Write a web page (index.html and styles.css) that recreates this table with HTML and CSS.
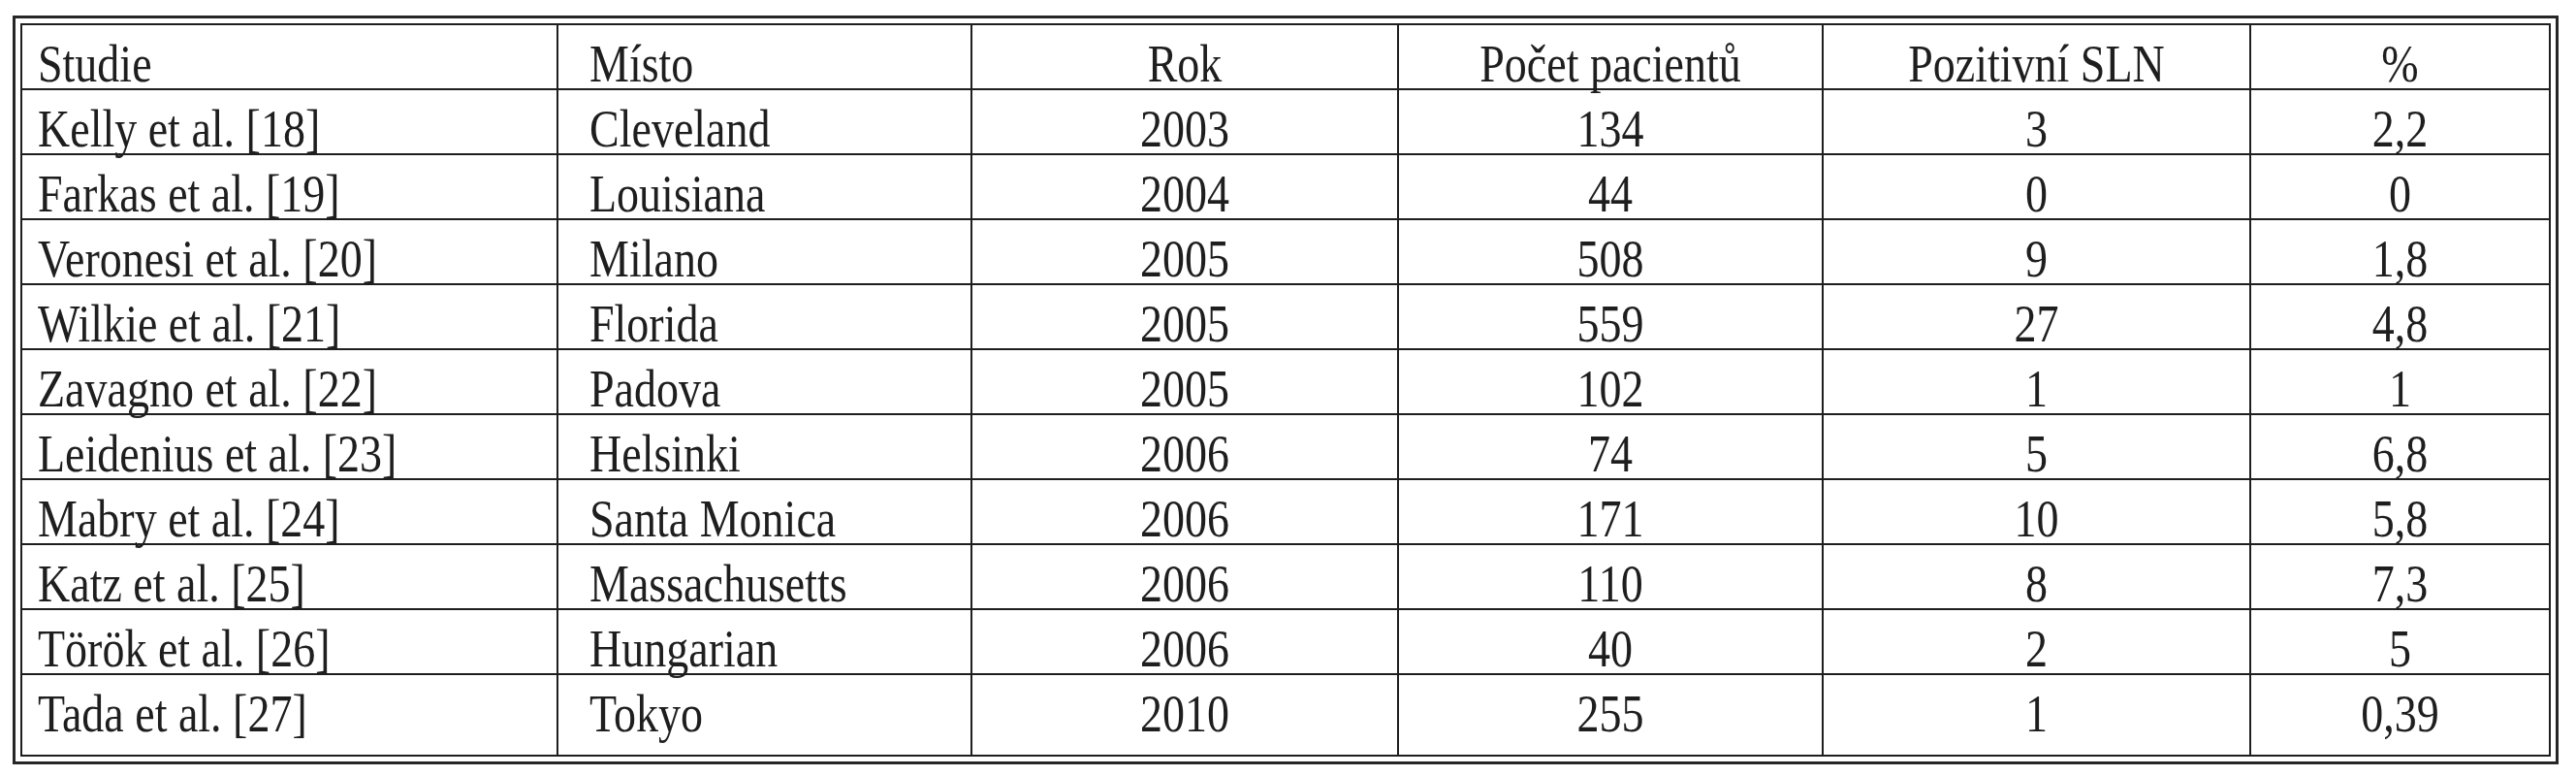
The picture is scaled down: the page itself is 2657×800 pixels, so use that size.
FILE: index.html
```html
<!DOCTYPE html>
<html lang="cs">
<head>
<meta charset="utf-8">
<title>Tabulka</title>
<link rel="stylesheet" href="styles.css">
</head>
<body>
<div class="frame">
  <table class="data">
    <colgroup>
      <col class="c1"><col class="c2"><col class="c3"><col class="c4"><col class="c5"><col class="c6">
    </colgroup>
    <tbody>
      <tr><td class="l1"><span class="t">Studie</span></td><td class="l2"><span class="t">Místo</span></td><td><span class="t">Rok</span></td><td><span class="t">Počet pacientů</span></td><td><span class="t">Pozitivní SLN</span></td><td><span class="t">%</span></td></tr>
      <tr><td class="l1"><span class="t">Kelly et al. [18]</span></td><td class="l2"><span class="t">Cleveland</span></td><td><span class="t">2003</span></td><td><span class="t">134</span></td><td><span class="t">3</span></td><td><span class="t">2,2</span></td></tr>
      <tr><td class="l1"><span class="t">Farkas et al. [19]</span></td><td class="l2"><span class="t">Louisiana</span></td><td><span class="t">2004</span></td><td><span class="t">44</span></td><td><span class="t">0</span></td><td><span class="t">0</span></td></tr>
      <tr><td class="l1"><span class="t">Veronesi et al. [20]</span></td><td class="l2"><span class="t">Milano</span></td><td><span class="t">2005</span></td><td><span class="t">508</span></td><td><span class="t">9</span></td><td><span class="t">1,8</span></td></tr>
      <tr><td class="l1"><span class="t">Wilkie et al. [21]</span></td><td class="l2"><span class="t">Florida</span></td><td><span class="t">2005</span></td><td><span class="t">559</span></td><td><span class="t">27</span></td><td><span class="t">4,8</span></td></tr>
      <tr><td class="l1"><span class="t">Zavagno et al. [22]</span></td><td class="l2"><span class="t">Padova</span></td><td><span class="t">2005</span></td><td><span class="t">102</span></td><td><span class="t">1</span></td><td><span class="t">1</span></td></tr>
      <tr><td class="l1"><span class="t">Leidenius et al. [23]</span></td><td class="l2"><span class="t">Helsinki</span></td><td><span class="t">2006</span></td><td><span class="t">74</span></td><td><span class="t">5</span></td><td><span class="t">6,8</span></td></tr>
      <tr><td class="l1"><span class="t">Mabry et al. [24]</span></td><td class="l2"><span class="t">Santa Monica</span></td><td><span class="t">2006</span></td><td><span class="t">171</span></td><td><span class="t">10</span></td><td><span class="t">5,8</span></td></tr>
      <tr><td class="l1"><span class="t">Katz et al. [25]</span></td><td class="l2"><span class="t">Massachusetts</span></td><td><span class="t">2006</span></td><td><span class="t">110</span></td><td><span class="t">8</span></td><td><span class="t">7,3</span></td></tr>
      <tr><td class="l1"><span class="t">Török et al. [26]</span></td><td class="l2"><span class="t">Hungarian</span></td><td><span class="t">2006</span></td><td><span class="t">40</span></td><td><span class="t">2</span></td><td><span class="t">5</span></td></tr>
      <tr class="last"><td class="l1"><span class="t">Tada et al. [27]</span></td><td class="l2"><span class="t">Tokyo</span></td><td><span class="t">2010</span></td><td><span class="t">255</span></td><td><span class="t">1</span></td><td><span class="t">0,39</span></td></tr>
    </tbody>
  </table>
</div>
</body>
</html>
```
FILE: styles.css
```css
html, body {
  margin: 0;
  padding: 0;
  background: #ffffff;
}
body {
  width: 2657px;
  height: 800px;
  overflow: hidden;
  font-family: "Liberation Serif", "Times New Roman", serif;
  color: #1e1e1e;
}
.frame {
  margin: 16px 18px 0 13px;
  border: 3px solid #262626;
  padding: 5px;
}
.data {
  width: 100%;
  table-layout: fixed;
  border-collapse: collapse;
  border: 2px solid #1e1e1e;
}
.c1 { width: 553px; }
.c2 { width: 427px; }
.c3 { width: 440px; }
.c4 { width: 438px; }
.c5 { width: 441px; }
.c6 { width: 309px; }
.data td {
  border: 2px solid #1e1e1e;
  height: 67px;
  padding: 16px 0 0 0;
  box-sizing: border-box;
  text-align: center;
  vertical-align: middle;
  font-size: 46px;
  line-height: 1;
  white-space: nowrap;
}
.data td.l1 {
  text-align: left;
  padding-left: 16px;
}
.data td.l2 {
  text-align: left;
  padding-left: 32px;
}
.data tr.last td {
  height: 84px;
  padding-bottom: 17px;
}
.t {
  display: inline-block;
  transform: scaleY(1.2);
  transform-origin: 50% 60%;
}
```
